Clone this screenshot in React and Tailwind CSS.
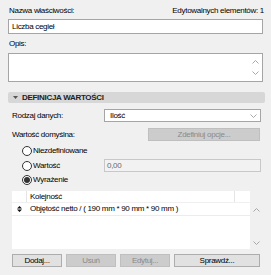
import React from "react";

const font = { fontFamily: '"Liberation Sans", Arial, sans-serif' };

function Chevron({ up }) {
  return (
    <svg width="7" height="4" viewBox="0 0 7 4" className="block">
      <path d={up ? "M0.5 3.5 L3.5 0.5 L6.5 3.5" : "M0.5 0.5 L3.5 3.5 L6.5 0.5"} fill="none" stroke="#a8a8a8" strokeWidth="1" />
    </svg>
  );
}

function Radio({ checked, label }) {
  return (
    <div className="flex items-center gap-[1px]">
      <div className="w-[10px] h-[10px] rounded-full border border-[#333] bg-white flex items-center justify-center">
        {checked && <div className="w-[6px] h-[6px] rounded-full bg-[#333]" />}
      </div>
      <span>{label}</span>
    </div>
  );
}

function Btn({ children, disabled, className = "" }) {
  return (
    <div
      className={
        "h-[13px] flex items-center justify-center border " +
        (disabled
          ? "bg-[#cccccc] border-[#bfbfbf] text-[#8a8a8a] "
          : "bg-[#e1e1e1] border-[#adadad] text-black ") +
        className
      }
    >
      {children}
    </div>
  );
}

export default function App() {
  return (
    <div
      className="w-[271px] h-[275px] bg-[#f0f0f0] text-[8px] leading-none text-black tracking-[-0.3px] overflow-hidden"
      style={font}
    >
      {/* Nazwa */}
      <div className="flex justify-between items-center h-[19px] pl-[9px] pr-[7px] pt-[2px]">
        <span>Nazwa właściwości:</span>
        <span>Edytowalnych elementów: 1</span>
      </div>
      <div className="mx-[8px] h-[15px] border border-[#a5a5a5] bg-white flex items-center pl-[3px]">
        Liczba cegieł
      </div>

      {/* Opis */}
      <div className="h-[19px] flex items-center pl-[9px]">Opis:</div>
      <div className="mx-[8px] h-[29px] border border-[#a5a5a5] bg-white flex justify-end">
        <div className="w-[13px] flex flex-col items-center justify-between py-[6px]">
          <Chevron up />
          <Chevron />
        </div>
      </div>

      {/* Definicja */}
      <div className="mt-[10px] mx-[8px] mr-[6px] h-[11px] rounded-[2px] bg-[#d7d7d7] flex items-center pl-[5px] gap-[4px] font-bold text-[#222]">
        <svg width="5" height="3" viewBox="0 0 5 3">
          <path d="M0 0 L5 0 L2.5 3 Z" fill="#555" />
        </svg>
        <span>DEFINICJA WARTOŚCI</span>
      </div>

      <div className="mt-[6px] flex items-center h-[13px] pl-[12px] pr-[10px]">
        <span className="w-[92px]">Rodzaj danych:</span>
        <div className="flex-1 h-[13px] border border-[#a5a5a5] bg-white flex items-center justify-between pl-[5px] pr-[3px]">
          <span>Ilość</span>
          <Chevron />
        </div>
      </div>

      <div className="mt-[6px] flex items-center h-[13px] pl-[12px] pr-[11px]">
        <span className="flex-1">Wartość domyślna:</span>
        <Btn disabled className="w-[112px]">Zdefiniuj opcje...</Btn>
      </div>

      <div className="mt-[3px] h-[14px] flex items-center pl-[22px]">
        <Radio label="Niezdefiniowane" />
      </div>
      <div className="mt-[1px] flex items-center h-[13px] pl-[22px] pr-[10px]">
        <div className="w-[82px]">
          <Radio label="Wartość" />
        </div>
        <div className="flex-1 h-[13px] border border-[#c8c8c8] bg-[#f2f2f2] flex items-center pl-[2px] text-[#6a6a6a]">
          0,00
        </div>
      </div>
      <div className="mt-[1px] h-[14px] flex items-center pl-[22px]">
        <Radio checked label="Wyrażenie" />
      </div>

      {/* Tabela */}
      <div className="mt-[4px] ml-[12px] mr-[9px] h-[58px] flex">
        <div className="flex-1 bg-white flex flex-col">
          <div className="h-[12px] flex border-b border-[#f0f0f0]">
            <div className="w-[15px] border-r border-[#e5e5e5]" />
            <div className="flex-1 flex items-center pl-[3px] border-r border-[#e5e5e5]">Kolejność</div>
            <div className="w-[15px]" />
          </div>
          <div className="h-[13px] flex items-center border-b border-[#ececec]">
            <div className="w-[15px] flex justify-center">
              <svg width="5" height="6" viewBox="0 0 5 6">
                <path d="M0 2.5 L2.5 0 L5 2.5 Z M0 3.5 L5 3.5 L2.5 6 Z" fill="#111" />
              </svg>
            </div>
            <span className="pl-[3px]">Objętość netto / ( 190 mm * 90 mm * 90 mm )</span>
          </div>
        </div>
        <div className="w-[12px] flex flex-col items-center justify-between pt-[17px] pb-[4px]">
          <Chevron up />
          <Chevron />
        </div>
      </div>

      {/* Przyciski */}
      <div className="mt-[5px] flex pl-[12px] pr-[11px] gap-[4px]">
        <Btn className="w-[50px]">Dodaj...</Btn>
        <Btn disabled className="w-[50px]">Usuń</Btn>
        <Btn disabled className="w-[50px]">Edytuj...</Btn>
        <Btn className="flex-1">Sprawdź...</Btn>
      </div>
    </div>
  );
}
